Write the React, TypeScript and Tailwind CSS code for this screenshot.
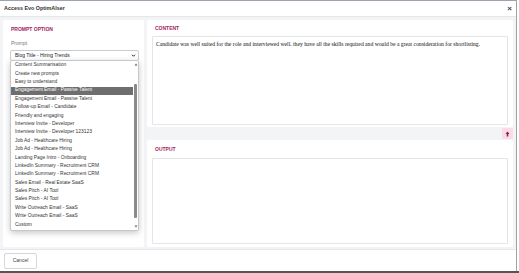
// Prompt option dialog — "Access Evo OptimAIser"

const options = [
  "Content Summarisation",
  "Create new prompts",
  "Easy to understand",
  "Engagement Email - Passive Talent",
  "Engagement Email - Passive Talent",
  "Follow-up Email - Candidate",
  "Friendly and engaging",
  "Interview Invite - Developer",
  "Interview Invite - Developer 123123",
  "Job Ad - Healthcare Hiring",
  "Job Ad - Healthcare Hiring",
  "Landing Page Intro - Onboarding",
  "LinkedIn Summary - Recruitment CRM",
  "LinkedIn Summary - Recruitment CRM",
  "Sales Email - Real Estate SaaS",
  "Sales Pitch - AI Tool",
  "Sales Pitch - AI Tool",
  "Write Outreach Email - SaaS",
  "Write Outreach Email - SaaS",
  "Custom",
];

const contentText =
  "Candidate was well suited for the role and interviewed well. they have all the skills required and would be a great consideration for shortlisting.";

function SectionTitle({ children }: { children: string }) {
  return (
    <p className="text-[5px] font-bold uppercase leading-none text-[#a3245f]">{children}</p>
  );
}

export default function App() {
  return (
    <div
      className="flex h-[273px] w-[519px] flex-col overflow-hidden bg-white text-[#333]"
      style={{ fontFamily: '"Liberation Sans", Arial, sans-serif' }}
    >
      <div className="mr-[2px] flex min-h-0 flex-1 flex-col border-r border-t border-[#9ca3af]">
        {/* title bar */}
        <div className="flex h-[16px] items-center justify-between border-b border-[#e5e7eb] px-[4px]">
          <span className="text-[5.4px] font-bold text-[#333]">Access Evo OptimAIser</span>
          <span className="text-[8px] font-bold leading-none text-[#444]">×</span>
        </div>

        {/* body */}
        <div className="flex min-h-0 flex-1 gap-[3px] bg-[#f3f4f6] px-[3px] pt-[3px] pb-[2px]">
          {/* left card */}
          <div className="relative flex w-[141px] flex-col rounded-[2px] bg-white pl-[7px] pr-[5px] pt-[7px]">
            <div className="pl-[1px]">
              <SectionTitle>Prompt Option</SectionTitle>
            </div>
            <p className="mt-[9px] pl-[1px] text-[5px] leading-none text-[#777]">Prompt</p>
            <div className="mt-[4px] flex h-[11px] items-center justify-between rounded-[2px] border border-[#c9ccd1] pl-[4px] pr-[2px] text-[5px] text-[#222]">
              <span>Blog Title - Hiring Trends</span>
              <svg width="5" height="5" viewBox="0 0 10 10">
                <path d="M2 3.5 L5 6.5 L8 3.5" fill="none" stroke="#222" strokeWidth="2" />
              </svg>
            </div>

            {/* open dropdown */}
            <div className="absolute left-[7px] top-[40px] flex w-[129px] overflow-hidden rounded-[2px] border border-[#c4c7cc] bg-white shadow-[0_2px_6px_rgba(0,0,0,0.22)]">
              <ul className="flex-1 py-[0.5px]">
                {options.map((opt, i) => (
                  <li
                    key={i}
                    className={
                      "flex h-[8.4px] items-center pl-[4px] text-[4.9px] leading-none " +
                      (i === 3 ? "bg-[#6e6e6e] text-white" : "text-[#333]")
                    }
                  >
                    {opt}
                  </li>
                ))}
              </ul>
              <div className="flex w-[5px] flex-col items-center bg-white">
                <svg width="4" height="5" viewBox="0 0 8 8" className="mt-[1px]">
                  <path d="M1 6 L4 2 L7 6Z" fill="#666" />
                </svg>
                <div className="mt-[17px] h-[134px] w-[3px] rounded-[1px] bg-[#8a8a8a]" />
                <svg width="4" height="5" viewBox="0 0 8 8" className="mb-[1px] mt-auto">
                  <path d="M1 2 L4 6 L7 2Z" fill="#666" />
                </svg>
              </div>
            </div>
          </div>

          {/* right column */}
          <div className="flex min-w-0 flex-1 flex-col">
            <div className="flex h-[107px] flex-col rounded-[2px] bg-white px-[5px] pb-[2px] pt-[6px]">
              <div className="pl-[3px]">
                <SectionTitle>Content</SectionTitle>
              </div>
              <div
                className="mt-[5px] flex-1 rounded-[1px] border border-[#e3e5e8] px-[3px] pt-[4px] text-[5.65px] leading-tight text-[#111]"
                style={{ fontFamily: '"Liberation Serif", "Times New Roman", serif' }}
              >
                {contentText}
              </div>
            </div>

            <div className="flex h-[13px] items-center justify-end bg-[#f3f4f6]">
              <div className="flex h-[11px] w-[11px] items-center justify-center rounded-[1px] bg-[#fadbe6]">
                <svg width="5" height="6" viewBox="0 0 10 12">
                  <path d="M5 1 L9 6 L6.5 6 L6.5 11 L3.5 11 L3.5 6 L1 6Z" fill="#8b1d4f" />
                </svg>
              </div>
            </div>

            <div className="flex min-h-0 flex-1 flex-col rounded-[2px] bg-white px-[5px] pb-[3px] pt-[7px]">
              <div className="pl-[3px]">
                <SectionTitle>Output</SectionTitle>
              </div>
              <div className="mt-[6px] flex-1 rounded-[1px] border border-[#e3e5e8]" />
            </div>
          </div>
        </div>

        {/* footer */}
        <div className="flex h-[22px] items-center border-t border-[#e5e7eb] pl-[4px]">
          <button className="flex h-[16px] w-[33px] items-center justify-center rounded-[2px] border border-[#d4d6da] bg-white text-[5px] text-[#444]">
            Cancel
          </button>
        </div>
      </div>
      <div className="h-[2px] bg-[#555]" />
    </div>
  );
}
